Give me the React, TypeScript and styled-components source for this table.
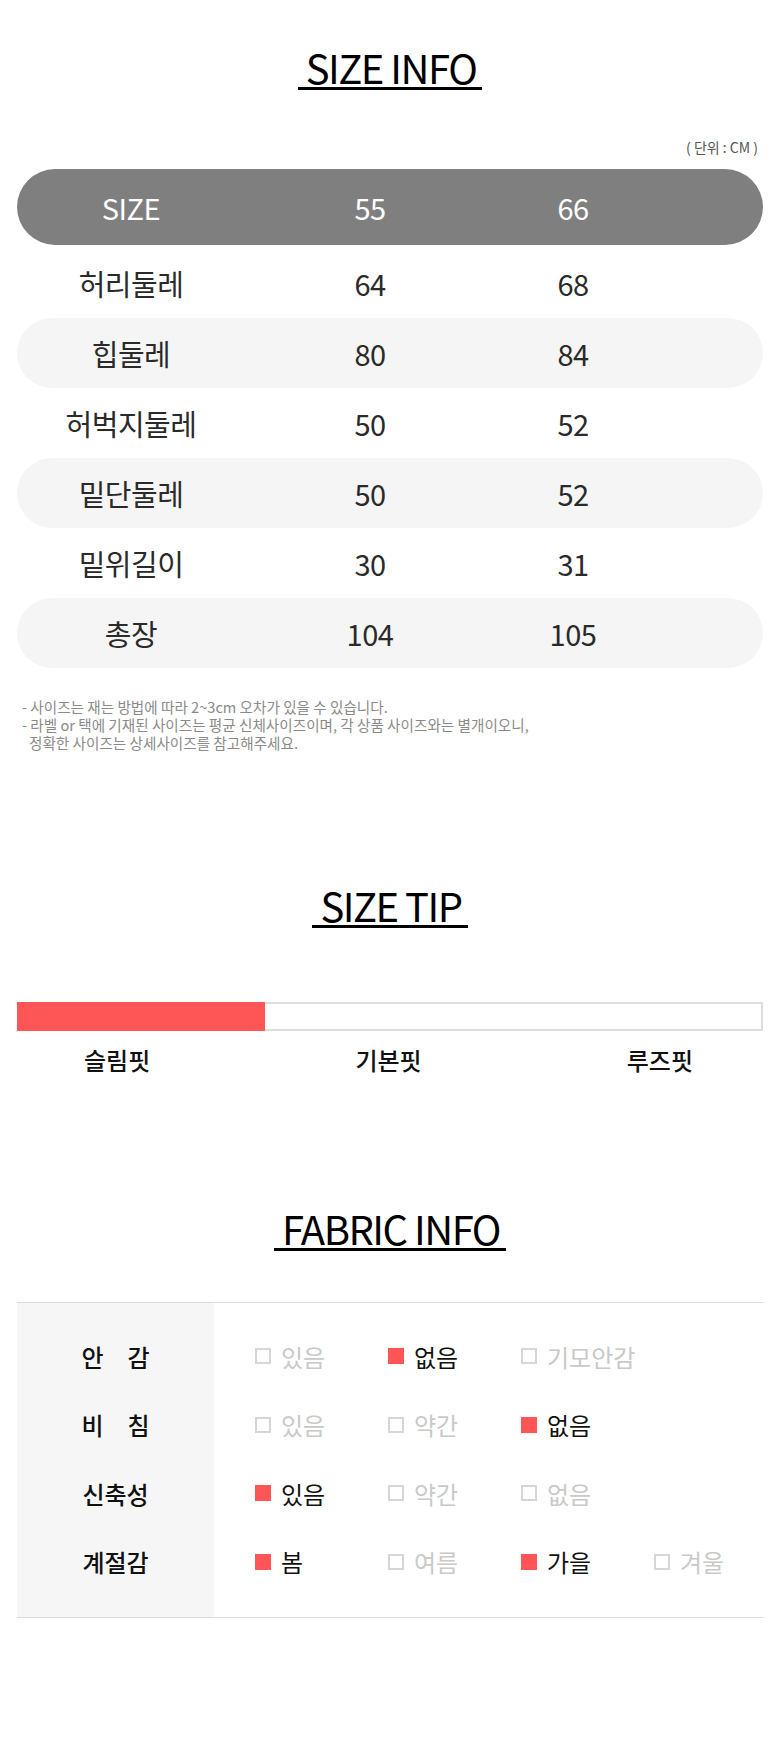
import React from "react";
import styled, { createGlobalStyle } from "styled-components";

const GlobalStyle = createGlobalStyle`
  html, body {
    margin: 0;
    padding: 0;
    background: #fff;
  }
  body {
    font-family: "Noto Sans CJK KR", "Noto Sans", sans-serif;
    color: #111;
  }
`;

const Page = styled.div`
  width: 780px;
  min-height: 1758px;
  padding: 0 17px;
  box-sizing: border-box;
`;

const TitleWrap = styled.div<{ $top: number }>`
  text-align: center;
  padding-top: ${(p) => p.$top}px;
`;

const Title = styled.h2`
  display: inline-block;
  margin: 0;
  padding: 0 6px 0 8px;
  font-size: 40px;
  font-weight: 400;
  line-height: 40px;
  letter-spacing: -1.5px;
  color: #000;
  border-bottom: 3px solid #000;
`;

const Unit = styled.div`
  margin-top: 48px;
  padding-right: 5px;
  text-align: right;
  font-size: 14px;
  line-height: 18px;
  color: #555;
`;

const SizeTable = styled.div`
  margin-top: 13px;
  display: flex;
  flex-direction: column;
`;

const SizeRow = styled.div<{ $tone: "head" | "shade" | "plain" }>`
  display: grid;
  grid-template-columns: 228px 250px 156px 1fr;
  align-items: center;
  height: ${(p) => (p.$tone === "head" ? 76 : 70)}px;
  margin-bottom: ${(p) => (p.$tone === "head" ? 3 : 0)}px;
  border-radius: 40px;
  background: ${(p) =>
    p.$tone === "head" ? "#7f7f7f" : p.$tone === "shade" ? "#f5f5f5" : "transparent"};
  color: ${(p) => (p.$tone === "head" ? "#fff" : "#2a2a2a")};
  font-size: 29px;
  letter-spacing: -0.5px;
`;

const Cell = styled.div`
  text-align: center;
`;

const Notes = styled.div`
  margin-top: 30px;
  padding-left: 5px;
  font-size: 14.6px;
  line-height: 18px;
  color: #8a8a8a;
`;

const NoteLine = styled.div<{ $indent?: boolean }>`
  padding-left: ${(p) => (p.$indent ? 7 : 0)}px;
`;

const FitBar = styled.div`
  margin-top: 74px;
  height: 29px;
  box-sizing: border-box;
  border: 2px solid #ddd;
  display: flex;
`;

const FitFill = styled.div`
  margin: -2px 0 -2px -2px;
  background: #fe5656;
`;

const FitLabels = styled.div`
  margin-top: 15px;
  padding: 0 70px 0 67px;
  display: flex;
  justify-content: space-between;
  font-size: 24px;
  font-weight: 500;
  line-height: 28px;
  color: #111;
`;

const FabricTable = styled.div`
  margin-top: 51px;
  padding: 19px 0 21px;
  border-top: 1px solid #ddd;
  border-bottom: 1px solid #ddd;
  background: linear-gradient(to right, #f6f6f6 197px, #fff 197px);
`;

const FabricRow = styled.div`
  display: grid;
  grid-template-columns: 197px 1fr;
  align-items: center;
  height: 68.5px;
`;

const FabricLabel = styled.div`
  text-align: center;
  font-size: 24px;
  font-weight: 500;
  color: #111;
`;

const Options = styled.div`
  display: grid;
  grid-template-columns: repeat(4, 133px);
  padding-left: 41px;
`;

const Option = styled.div<{ $on: boolean }>`
  display: flex;
  align-items: center;
  gap: 10px;
  font-size: 24px;
  color: ${(p) => (p.$on ? "#111" : "#c9c9c9")};
`;

const Box = styled.span<{ $on: boolean }>`
  width: 16px;
  height: 16px;
  box-sizing: border-box;
  flex: none;
  background: ${(p) => (p.$on ? "#fe5656" : "#fff")};
  border: ${(p) => (p.$on ? "none" : "2px solid #d6d6d6")};
`;

const sizes = [
  { name: "허리둘레", a: "64", b: "68" },
  { name: "힙둘레", a: "80", b: "84" },
  { name: "허벅지둘레", a: "50", b: "52" },
  { name: "밑단둘레", a: "50", b: "52" },
  { name: "밑위길이", a: "30", b: "31" },
  { name: "총장", a: "104", b: "105" },
];

const fabric: { label: string; opts: [string, boolean][] }[] = [
  { label: "안　감", opts: [["있음", false], ["없음", true], ["기모안감", false]] },
  { label: "비　침", opts: [["있음", false], ["약간", false], ["없음", true]] },
  { label: "신축성", opts: [["있음", true], ["약간", false], ["없음", false]] },
  { label: "계절감", opts: [["봄", true], ["여름", false], ["가을", true], ["겨울", false]] },
];

export default function App() {
  return (
    <Page>
      <GlobalStyle />
      <TitleWrap $top={47}>
        <Title>SIZE INFO</Title>
      </TitleWrap>
      <Unit>( 단위 : CM )</Unit>
      <SizeTable>
        <SizeRow $tone="head">
          <Cell>SIZE</Cell>
          <Cell>55</Cell>
          <Cell>66</Cell>
        </SizeRow>
        {sizes.map((s, i) => (
          <SizeRow key={s.name} $tone={i % 2 ? "shade" : "plain"}>
            <Cell>{s.name}</Cell>
            <Cell>{s.a}</Cell>
            <Cell>{s.b}</Cell>
          </SizeRow>
        ))}
      </SizeTable>
      <Notes>
        <NoteLine>- 사이즈는 재는 방법에 따라 2~3cm 오차가 있을 수 있습니다.</NoteLine>
        <NoteLine>- 라벨 or 택에 기재된 사이즈는 평균 신체사이즈이며, 각 상품 사이즈와는 별개이오니,</NoteLine>
        <NoteLine $indent>정확한 사이즈는 상세사이즈를 참고해주세요.</NoteLine>
      </Notes>

      <TitleWrap $top={133}>
        <Title>SIZE TIP</Title>
      </TitleWrap>
      <FitBar>
        <FitFill style={{ width: "33.4%" }} />
      </FitBar>
      <FitLabels>
        <span>슬림핏</span>
        <span>기본핏</span>
        <span>루즈핏</span>
      </FitLabels>

      <TitleWrap $top={134}>
        <Title>FABRIC INFO</Title>
      </TitleWrap>
      <FabricTable>
        {fabric.map((row) => (
          <FabricRow key={row.label}>
            <FabricLabel>{row.label}</FabricLabel>
            <Options>
              {row.opts.map(([text, on]) => (
                <Option key={text} $on={on}>
                  <Box $on={on} />
                  {text}
                </Option>
              ))}
            </Options>
          </FabricRow>
        ))}
      </FabricTable>
    </Page>
  );
}
